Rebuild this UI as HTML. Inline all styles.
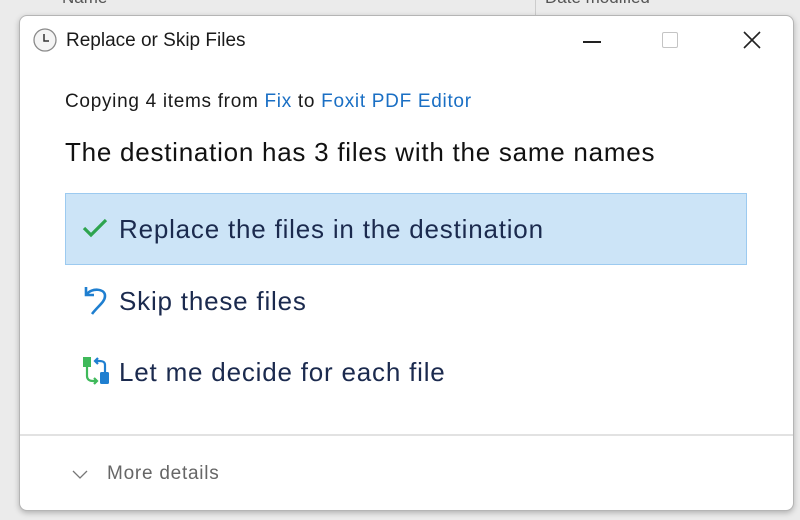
<!DOCTYPE html>
<html><head><style>
body{margin:0;width:800px;height:520px;background:#ebebeb;font-family:"Liberation Sans",sans-serif;position:relative;overflow:hidden}
.hdr{position:absolute;top:-12px;font-size:17px;color:#555}
.win{position:absolute;left:19px;top:15px;width:773px;height:494px;background:#fff;border:1px solid #b5b5b5;border-radius:8px;box-shadow:0 2px 6px rgba(0,0,0,.25);overflow:hidden}
.t{position:absolute;white-space:nowrap}
a{color:#1a6fc4;text-decoration:none}
.sel{position:absolute;left:45px;top:177px;width:680px;height:70px;background:#cce4f7;border:1px solid #9ccaf0}
.opt{position:absolute;left:99px;font-size:26px;letter-spacing:0.8px;color:#1b2a4e;white-space:nowrap}
.foot{position:absolute;left:0;top:418px;width:100%;height:76px;border-top:2px solid #e2e2e2}
</style></head><body>
<div class="hdr" style="left:62px">Name</div>
<div style="position:absolute;left:535px;top:0;width:1px;height:15px;background:#ccc"></div>
<div class="hdr" style="left:545px">Date modified</div>
<div class="win">
<svg style="position:absolute;left:13px;top:12px" width="24" height="24" viewBox="0 0 24 24"><circle cx="12" cy="12" r="11" fill="#f4f4f4" stroke="#8a8a8a" stroke-width="1.3"/><path d="M11 6v7h5" fill="none" stroke="#333" stroke-width="1.5"/></svg>
<div class="t" style="left:46px;top:14px;font-size:19px;color:#1a1a1a">Replace or Skip Files</div>
<div style="position:absolute;left:563px;top:25px;width:18px;height:1.5px;background:#222"></div>
<div style="position:absolute;left:642px;top:16px;width:14px;height:14px;border:1.5px solid #c4c4c4;border-radius:2px"></div>
<svg style="position:absolute;left:723px;top:15px" width="18" height="18" viewBox="0 0 18 18"><path d="M1 1L17 17M17 1L1 17" stroke="#222" stroke-width="1.6"/></svg>
<div class="t" style="left:45px;top:75px;font-size:19px;letter-spacing:0.7px;color:#1a1a1a">Copying 4 items from <a>Fix</a> to <a>Foxit PDF Editor</a></div>
<div class="t" style="left:45px;top:121px;font-size:26px;letter-spacing:0.75px;color:#111">The destination has 3 files with the same names</div>
<div class="sel"></div>
<svg style="position:absolute;left:62px;top:202px" width="26" height="20" viewBox="0 0 26 20"><path d="M2 10l7 7L24 2" fill="none" stroke="#2ea44f" stroke-width="3.2"/></svg>
<div class="opt" style="top:198px">Replace the files in the destination</div>
<svg style="position:absolute;left:62px;top:268px" width="26" height="32" viewBox="0 0 26 32"><path d="M4 3v8h8" fill="none" stroke="#1f7fd0" stroke-width="2.6"/><path d="M5 10C9 4 23 4 23 12c0 6-7 10-13 18" fill="none" stroke="#1f7fd0" stroke-width="2.6"/></svg>
<div class="opt" style="top:270px">Skip these files</div>
<svg style="position:absolute;left:62px;top:340px" width="30" height="30" viewBox="0 0 30 30"><rect x="1" y="1" width="8" height="10" fill="#3fb95a"/><rect x="18" y="16" width="9" height="12" rx="1.5" fill="#1f7fd0"/><path d="M5 11v9c0 3 2 5 6 5h3M12 22l3 3-3 3" fill="none" stroke="#3fb95a" stroke-width="2.2"/><path d="M23 16V9c0-3-2-4-6-4h-3M16 2l-3 3 3 3" fill="none" stroke="#1f7fd0" stroke-width="2.2"/></svg>
<div class="opt" style="top:341px">Let me decide for each file</div>
<div class="foot">
<svg style="position:absolute;left:52px;top:34px" width="16" height="10" viewBox="0 0 16 10"><path d="M1 1l7 7 7-7" fill="none" stroke="#777" stroke-width="1.3"/></svg>
<div class="t" style="left:87px;top:27px;font-size:19px;letter-spacing:0.75px;color:#666">More details</div>
</div>
</div>
</body></html>
